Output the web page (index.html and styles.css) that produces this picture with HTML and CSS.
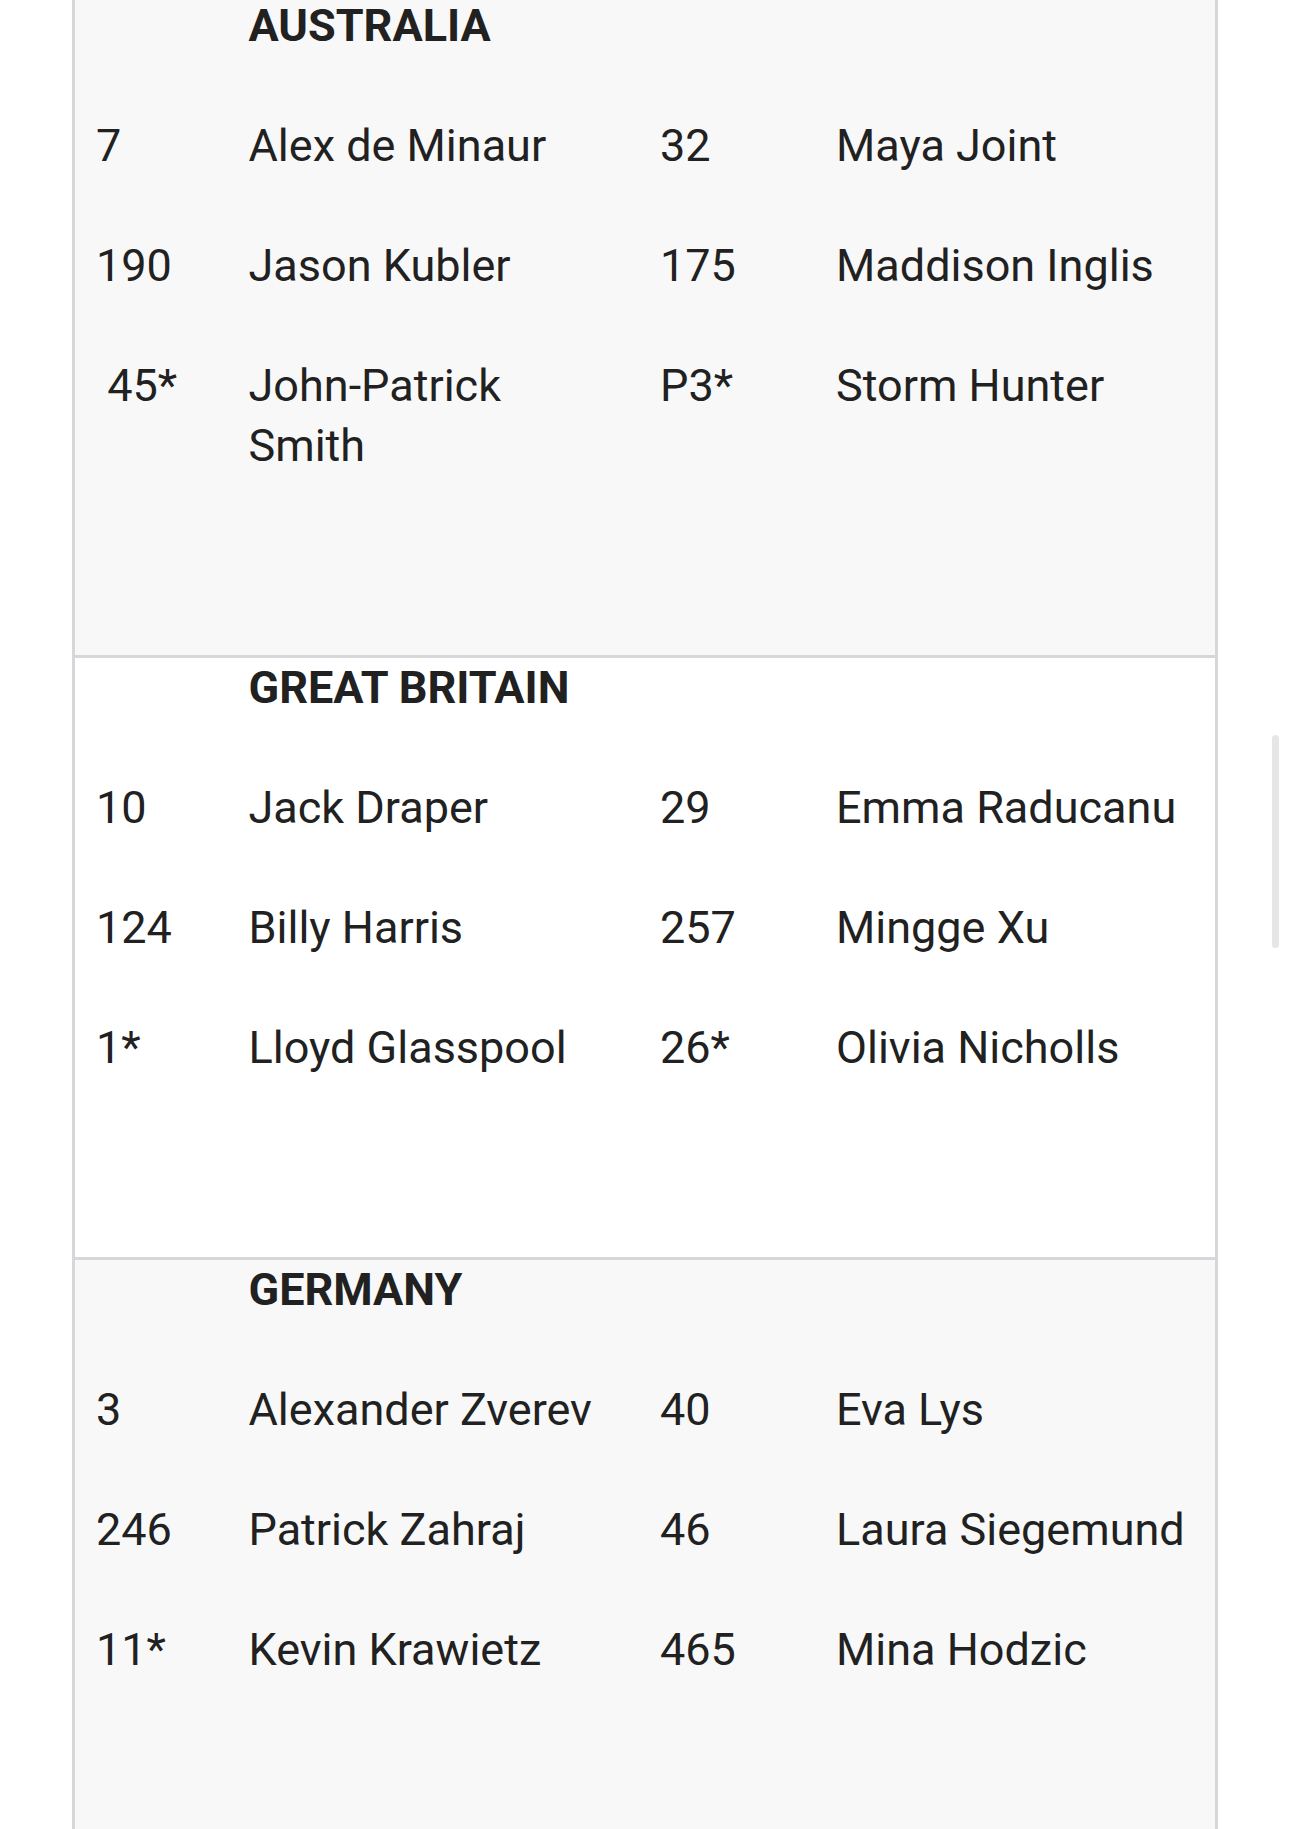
FILE: index.html
```html
<!DOCTYPE html>
<html lang="en">
<head>
<meta charset="utf-8">
<title>Teams</title>
<link rel="stylesheet" href="styles.css">
</head>
<body>
<div class="viewport">
  <div class="table">
    <section class="team team-shaded">
      <div class="team-head"><span></span><span class="team-name">AUSTRALIA</span><span></span><span></span></div>
      <div class="player-row"><span>7</span><span>Alex de Minaur</span><span>32</span><span>Maya Joint</span></div>
      <div class="player-row"><span>190</span><span>Jason Kubler</span><span>175</span><span>Maddison Inglis</span></div>
      <div class="player-row"><span>&nbsp;45*</span><span>John-Patrick Smith</span><span>P3*</span><span>Storm Hunter</span></div>
    </section>
    <section class="team">
      <div class="team-head"><span></span><span class="team-name">GREAT BRITAIN</span><span></span><span></span></div>
      <div class="player-row"><span>10</span><span>Jack Draper</span><span>29</span><span>Emma Raducanu</span></div>
      <div class="player-row"><span>124</span><span>Billy Harris</span><span>257</span><span>Mingge Xu</span></div>
      <div class="player-row"><span>1*</span><span>Lloyd Glasspool</span><span>26*</span><span>Olivia Nicholls</span></div>
    </section>
    <section class="team team-shaded">
      <div class="team-head"><span></span><span class="team-name">GERMANY</span><span></span><span></span></div>
      <div class="player-row"><span>3</span><span>Alexander Zverev</span><span>40</span><span>Eva Lys</span></div>
      <div class="player-row"><span>246</span><span>Patrick Zahraj</span><span>46</span><span>Laura Siegemund</span></div>
      <div class="player-row"><span>11*</span><span>Kevin Krawietz</span><span>465</span><span>Mina Hodzic</span></div>
    </section>
  </div>
  <div class="scroll-thumb"></div>
</div>
</body>
</html>
```

FILE: styles.css
```css
html, body {
  margin: 0;
  padding: 0;
  background: #ffffff;
}

.viewport {
  position: relative;
  height: 100vh;
  overflow: hidden;
  font-family: Roboto, "Noto Sans", sans-serif;
  font-size: 45px;
  line-height: 60px;
  color: #212121;
}

.table {
  margin: -4px 0 0 72px;
  width: 1140px;
  border-left: 3px solid #d6d7db;
  border-right: 3px solid #d6d7db;
}

.team {
  background: #ffffff;
  padding-bottom: 179px;
  border-bottom: 3px solid #d6d7db;
}

.team-shaded {
  background: #f8f8f8;
}

.team-head,
.player-row {
  display: grid;
  grid-template-columns: 152.5px 411.5px 176px 400px;
}

.team-head > span,
.player-row > span {
  padding: 0 21px;
}

.player-row {
  margin-top: 60px;
}

.team-name {
  font-weight: 700;
}

.scroll-thumb {
  position: absolute;
  left: 1272px;
  top: 735px;
  width: 7px;
  height: 213px;
  border-radius: 4px;
  background: #e6e6e6;
}
```
